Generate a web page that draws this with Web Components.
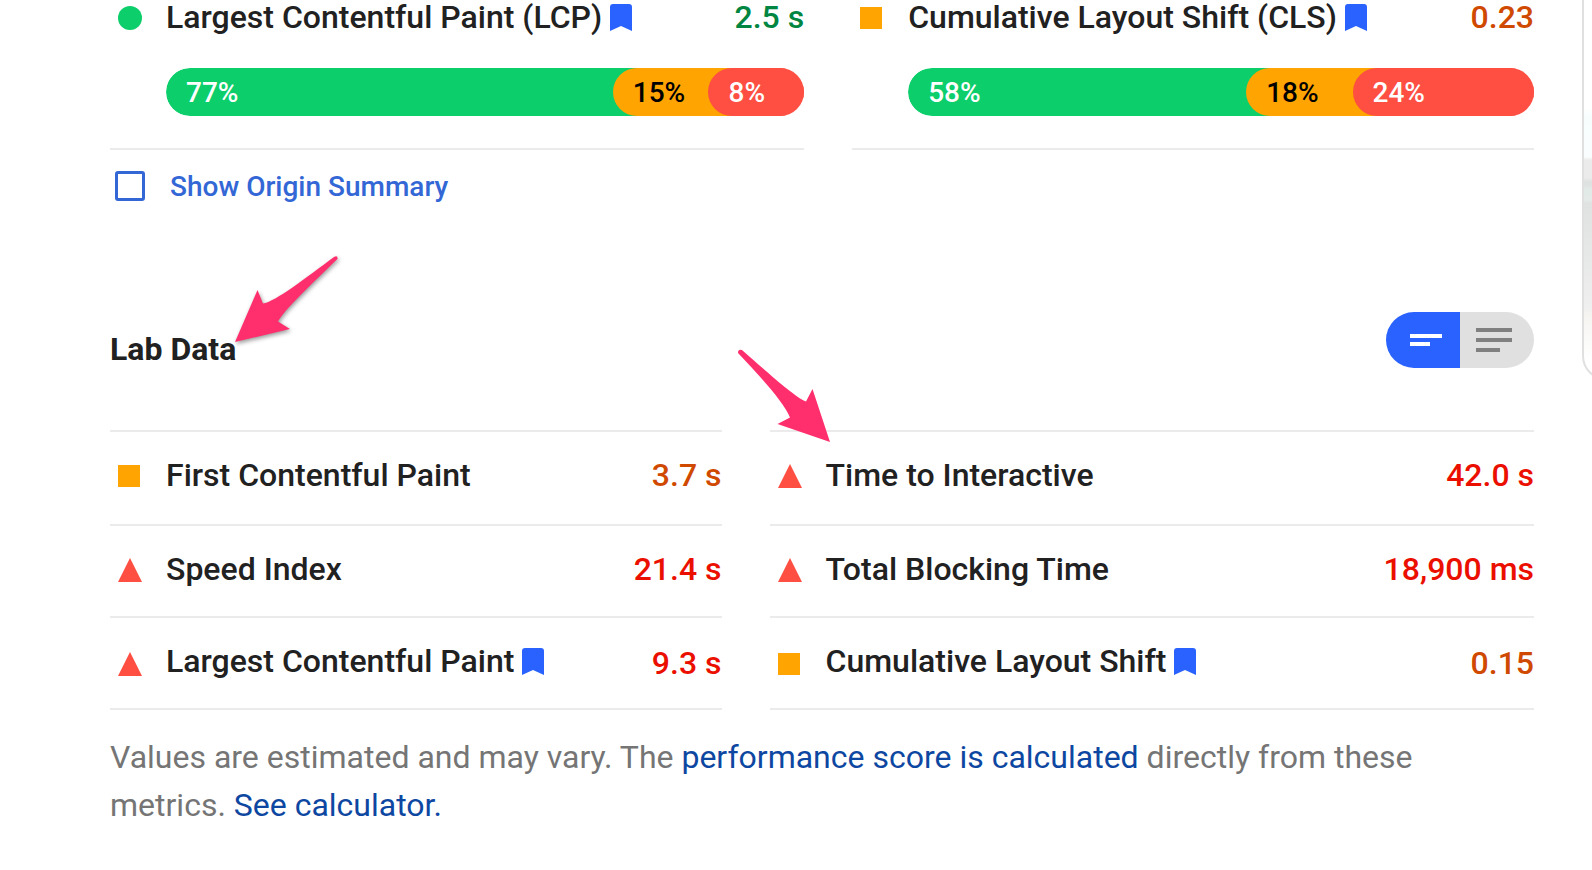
<!DOCTYPE html>
<html lang="en">
<head>
<meta charset="UTF-8">
<meta name="viewport" content="width=device-width, initial-scale=1">
<title>Lab Data</title>
<style>
  body {
    margin: 0;
    background: #fff;
    color: #212121;
    font-family: Roboto, "Liberation Sans", sans-serif;
  }
</style>
</head>
<body>
<report-page></report-page>

<script>
class MetricIcon extends HTMLElement {
  connectedCallback() {
    const shapes = {
      fast: '<circle cx="12" cy="12" r="12" fill="#0cce6b"/>',
      average: '<rect y="1" width="22" height="22" fill="#ffa400"/>',
      slow: '<path d="M12 0 24 24H0z" fill="#ff4e42"/>'
    };
    this.attachShadow({ mode: "open" }).innerHTML = `
      <style>
        :host { display: block; width: 24px; height: 24px; }
        svg { display: block; }
      </style>
      <svg width="24" height="24" viewBox="0 0 24 24" aria-hidden="true">${shapes[this.getAttribute("rating")]}</svg>
    `;
  }
}
customElements.define("metric-icon", MetricIcon);

class MetricHeading extends HTMLElement {
  connectedCallback() {
    const rating = this.getAttribute("rating");
    const bookmark = this.hasAttribute("bookmark")
      ? '<svg width="22" height="27" viewBox="0 0 22 27" aria-hidden="true"><path d="M3 0h16a3 3 0 0 1 3 3v24l-11-5-11 5V3a3 3 0 0 1 3-3z" fill="#2962ff"/></svg>'
      : "";
    this.attachShadow({ mode: "open" }).innerHTML = `
      <style>
        :host {
          display: grid;
          grid-template-columns: 24px 1fr auto;
          align-items: center;
          column-gap: 24px;
          padding-left: 8px;
          font-size: 32px;
          line-height: 34px;
          font-weight: 500;
        }
        metric-icon { margin-top: 2px; }
        .name { display: flex; align-items: center; gap: 8px; white-space: nowrap; }
        :host([bookmark]) .name { padding-bottom: var(--bookmark-space, 0); }
        .value { white-space: nowrap; }
        .fast { color: #018642; }
        .average { color: #d04900; }
        .slow { color: #eb0f00; }
      </style>
      <metric-icon rating="${rating}"></metric-icon>
      <div class="name"><slot></slot>${bookmark}</div>
      <div class="value ${rating}">${this.getAttribute("value")}</div>
    `;
  }
}
customElements.define("metric-heading", MetricHeading);

class DistributionBar extends HTMLElement {
  connectedCallback() {
    // share = flex share of the track, label = printed percentage
    const shares = this.getAttribute("shares").split(" ");
    const labels = this.getAttribute("labels").split(" ");
    const names = ["fast", "average", "slow"];
    this.attachShadow({ mode: "open" }).innerHTML = `
      <style>
        :host {
          display: flex;
          height: 48px;
          border-radius: 24px;
          overflow: hidden;
          font-size: 28px;
          line-height: 50px;
          font-weight: 500;
        }
        .part {
          min-width: 0;
          text-indent: 20px;
          border-radius: 24px 0 0 24px;
          background: var(--tone);
          box-shadow: 24px 0 0 var(--tone);
          color: #fff;
        }
        .fast { --tone: #0cce6b; }
        .average { --tone: #ffa400; color: #000; }
        .slow { --tone: #ff4e42; }
      </style>
      ${names.map((name, i) => `<div class="part ${name}" style="flex: ${shares[i]} 1 0%">${labels[i]}</div>`).join("")}
    `;
  }
}
customElements.define("distribution-bar", DistributionBar);

class FieldMetric extends HTMLElement {
  connectedCallback() {
    this.attachShadow({ mode: "open" }).innerHTML = `
      <style>
        :host { display: block; padding-bottom: 32px; border-bottom: 2px solid #ebebeb; }
        distribution-bar { margin: 34px 0 0 56px; }
      </style>
      <metric-heading rating="${this.getAttribute("rating")}" value="${this.getAttribute("value")}" bookmark><slot></slot></metric-heading>
      <distribution-bar shares="${this.getAttribute("shares")}" labels="${this.getAttribute("labels")}"></distribution-bar>
    `;
  }
}
customElements.define("field-metric", FieldMetric);

class OriginToggle extends HTMLElement {
  connectedCallback() {
    this.attachShadow({ mode: "open" }).innerHTML = `
      <style>
        :host { display: flex; padding-left: 5px; }
        label {
          display: flex;
          align-items: center;
          gap: 25px;
          height: 72px;
          color: #3367d6;
          font-size: 28px;
          font-weight: 500;
          cursor: pointer;
        }
        input {
          appearance: none;
          box-sizing: border-box;
          width: 30px;
          height: 30px;
          margin: 0;
          border: 3px solid #3367d6;
          border-radius: 3px;
        }
        input:checked { background: #3367d6; }
      </style>
      <label for="origin"><input type="checkbox" id="origin"><slot></slot></label>
    `;
  }
}
customElements.define("origin-toggle", OriginToggle);

class ViewSwitch extends HTMLElement {
  connectedCallback() {
    this.attachShadow({ mode: "open" }).innerHTML = `
      <style>
        :host { display: flex; border-radius: 28px; overflow: hidden; }
        button {
          display: flex;
          align-items: center;
          justify-content: center;
          width: 74px;
          height: 56px;
          margin: 0;
          padding: 0;
          border: 0;
          background: #e0e0e0;
          color: #808080;
          cursor: pointer;
        }
        button[aria-pressed="true"] { background: #2962ff; color: #fff; }
        .brief { padding-left: 6px; }
        .full { padding-right: 6px; }
      </style>
      <button type="button" class="brief" aria-pressed="true" aria-label="Compact view">
        <svg width="32" height="12" fill="currentColor"><path d="M0 0h32v4H0zM0 8h20v4H0z"/></svg>
      </button>
      <button type="button" class="full" aria-pressed="false" aria-label="Expanded view">
        <svg width="36" height="24" fill="currentColor"><path d="M0 0h36v4H0zM0 10h36v4H0zM0 20h24v4H0z"/></svg>
      </button>
    `;

    const buttons = this.shadowRoot.querySelectorAll("button");
    buttons.forEach((button) => {
      button.addEventListener("click", () => {
        buttons.forEach((b) => b.setAttribute("aria-pressed", String(b === button)));
      });
    });
  }
}
customElements.define("view-switch", ViewSwitch);

class CalloutArrow extends HTMLElement {
  connectedCallback() {
    const left = '<svg width="110" height="96" viewBox="0 0 110 96"><path d="M0 86 22.5 34 28 47.5C40 46 72 21 99 1Q103-1 102.500 3C79 26 49 54 43 65.500L55 73z"/></svg>';
    const right = '<svg width="100" height="96" viewBox="0 0 100 96"><path d="M92 92 39.500 74 52 67.500C46 52 20 24 0 3Q0-1 4 0C27 20 56 47 68 51.500L74.500 39z"/></svg>';
    this.attachShadow({ mode: "open" }).innerHTML = `
      <style>
        :host { display: block; pointer-events: none; }
        svg { display: block; overflow: visible; fill: #ff2f6d; }
        :host([to="left"]) svg { filter: drop-shadow(1px 2px 2px rgba(0, 0, 0, 0.4)); }
      </style>
      ${this.getAttribute("to") === "left" ? left : right}
    `;
  }
}
customElements.define("callout-arrow", CalloutArrow);

class LabColumn extends HTMLElement {
  connectedCallback() {
    this.attachShadow({ mode: "open" }).innerHTML = `
      <style>
        :host { display: block; position: relative; border-top: 2px solid #ebebeb; }
        ::slotted(metric-heading) {
          --bookmark-space: 4px;
          box-sizing: border-box;
          align-content: start;
          min-height: 92px;
          padding-top: 26px;
          border-bottom: 2px solid #ebebeb;
        }
        ::slotted(metric-heading:first-of-type) { min-height: 94px; }
        ::slotted(callout-arrow) { position: absolute; left: -32px; top: -82px; }
      </style>
      <slot></slot>
    `;
  }
}
customElements.define("lab-column", LabColumn);

class PreviewCard extends HTMLElement {
  connectedCallback() {
    this.attachShadow({ mode: "open" }).innerHTML = `
      <style>
        :host { display: block; overflow: hidden; }
        .card {
          box-sizing: border-box;
          width: 80px;
          height: 380px;
          border: 2px solid #e0e0e0;
          border-top: 0;
          border-radius: 0 0 24px 24px;
          background: linear-gradient(#fff 108px, #f7fdfd 116px, #fafdfd 157px, #eaebea 160px, #eaebea 178px, #dde1e0 182px, #dfe3e2 186px, #e2eae7 189px, #e3eae8 200px, #e0e2e1 203px, #e6e7e7 250px, #efefef 308px, #f5f4f1 315px, #fff 360px);
        }
      </style>
      <div class="card"></div>
    `;
  }
}
customElements.define("preview-card", PreviewCard);

class ReportPage extends HTMLElement {
  connectedCallback() {
    this.attachShadow({ mode: "open" }).innerHTML = `
      <style>
        :host { display: flex; }
        main { flex: 1; min-width: 0; margin: 0 48px 0 110px; }
        preview-card { width: 10px; }
        .field { display: grid; grid-template-columns: 56fr 55fr; column-gap: 48px; }
        .lab-header {
          position: relative;
          display: flex;
          align-items: flex-end;
          justify-content: space-between;
          margin: 90px 0 62px;
        }
        h2 { margin: 0; font-size: 32px; line-height: 38px; font-weight: 700; }
        .lab-header callout-arrow { position: absolute; left: 125px; top: -56px; }
        .lab { display: grid; grid-template-columns: 4fr 5fr; column-gap: 48px; }
        p {
          margin: 23px 0 0;
          font-size: 32px;
          line-height: 48px;
          color: #757575;
        }
        a { color: #0d47a1; text-decoration: none; }
      </style>
      <main>
        <section class="field">
          <field-metric rating="fast" value="2.5 s" shares="70 15 15" labels="77% 15% 8%">Largest Contentful Paint (LCP)</field-metric>
          <field-metric rating="average" value="0.23" shares="54 17 29" labels="58% 18% 24%">Cumulative Layout Shift (CLS)</field-metric>
        </section>
        <origin-toggle>Show Origin Summary</origin-toggle>

        <div class="lab-header">
          <h2>Lab Data</h2>
          <view-switch></view-switch>
          <callout-arrow to="left"></callout-arrow>
        </div>
        <section class="lab">
          <lab-column>
            <metric-heading rating="average" value="3.7 s">First Contentful Paint</metric-heading>
            <metric-heading rating="slow" value="21.4 s">Speed Index</metric-heading>
            <metric-heading rating="slow" value="9.3 s" bookmark>Largest Contentful Paint</metric-heading>
          </lab-column>
          <lab-column>
            <metric-heading rating="slow" value="42.0 s">Time to Interactive</metric-heading>
            <metric-heading rating="slow" value="18,900 ms">Total Blocking Time</metric-heading>
            <metric-heading rating="average" value="0.15" bookmark>Cumulative Layout Shift</metric-heading>
            <callout-arrow to="right"></callout-arrow>
          </lab-column>
        </section>
        <p>Values are estimated and may vary. The <a href="#score">performance score is calculated</a> directly from these metrics. <a href="#calculator">See calculator.</a></p>
      </main>
      <preview-card></preview-card>
    `;
  }
}
customElements.define("report-page", ReportPage);
</script>
</body>
</html>
